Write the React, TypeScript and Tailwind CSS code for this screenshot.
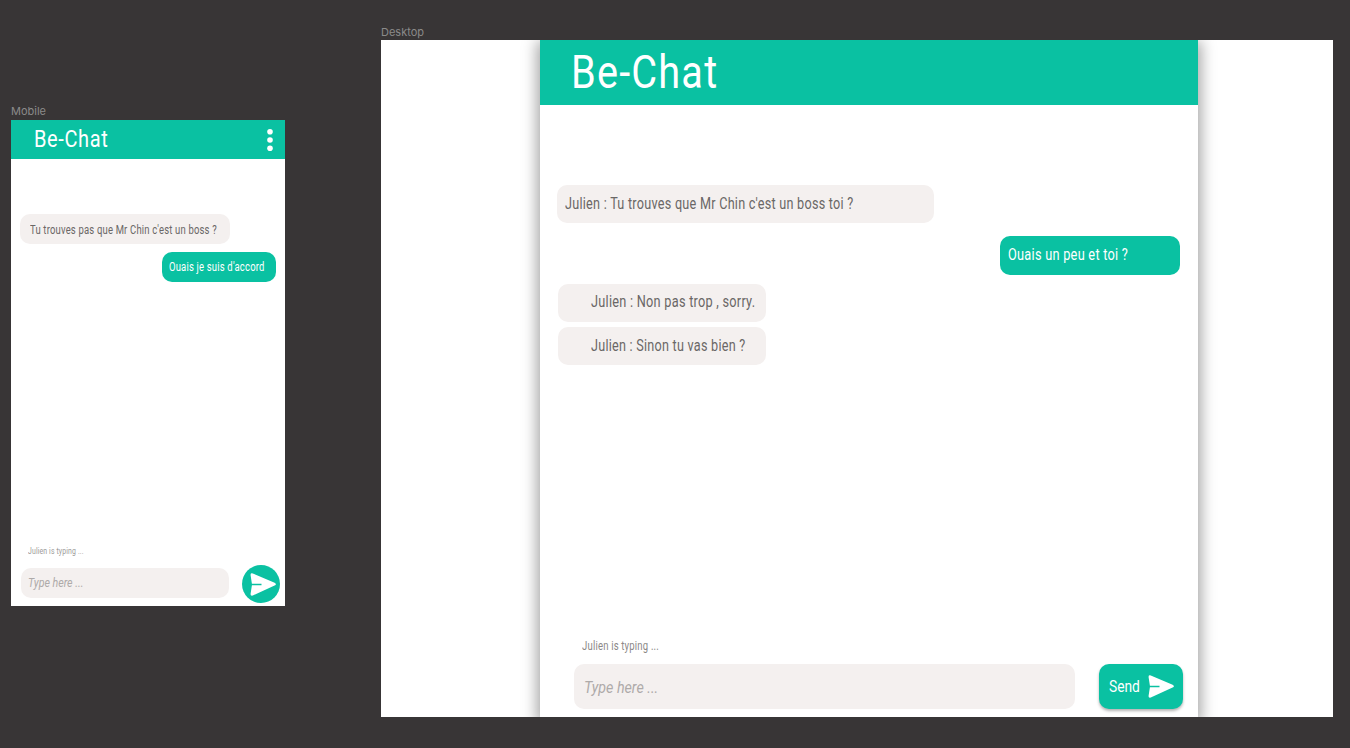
import { useLayoutEffect, useRef, useState } from "react";

type FitTextProps = { text: string; width: number; className?: string };

/* Condenses one line of text so that it spans the given width. */
function FitText({ text, width, className = "" }: FitTextProps) {
  const ref = useRef<HTMLSpanElement>(null);
  const [scale, setScale] = useState(1);
  useLayoutEffect(() => {
    if (ref.current) setScale(width / ref.current.offsetWidth);
  }, [text, width]);
  return (
    <span className={`block whitespace-nowrap ${className}`} style={{ width }}>
      <span ref={ref} className="inline-block origin-left" style={{ transform: `scaleX(${scale})` }}>
        {text}
      </span>
    </span>
  );
}

function SendIcon({ className }: { className: string }) {
  return (
    <svg viewBox="0 0 26 23" className={className} fill="none">
      <path
        d="M2.8 .4 24.6 9.8Q27.2 11.2 24.6 12.6L2.8 22.5Q.3 23.2 .6 20.8L1.9 12.3H11.5V10.8H1.9L.6 2.2Q.3 -.2 2.8 .4Z"
        fill="currentColor"
      />
    </svg>
  );
}

function Mobile() {
  return (
    <section className="mt-[104px] ml-[11px] w-[274px] shrink-0">
      <h2 className="h-4 font-[Inter] text-[11px] leading-[15px] text-[#8b8a8a]">
        <FitText text="Mobile" width={35} />
      </h2>
      <div className="flex h-[486px] flex-col bg-white">
        <header className="flex h-[39px] items-center justify-between bg-[#0ac1a2] pr-3 pl-[23px] text-white">
          <FitText text="Be-Chat" width={74} className="text-[23px] leading-[39px] tracking-[0.03em]" />
          <svg viewBox="0 0 6 22" className="h-[22px] w-[6px] fill-white">
            <circle cx="3" cy="2.8" r="2.8" />
            <circle cx="3" cy="11" r="2.8" />
            <circle cx="3" cy="19.2" r="2.8" />
          </svg>
        </header>
        <main className="flex flex-1 flex-col pt-[55px]">
          <div className="ml-[9px] flex h-[30px] w-[210px] items-center rounded-[10px] bg-[#f4f0ef] pt-[2px] pl-[10px] text-[#6a6766]">
            <FitText text="Tu trouves pas que Mr Chin c'est un boss ?" width={187} className="text-[12px] tracking-[0.02em]" />
          </div>
          <div className="mt-2 ml-[151px] flex h-[30px] w-[114px] items-center rounded-[10px] bg-[#0ac1a2] pl-[6.5px] text-white">
            <FitText text="Ouais je suis d'accord" width={95.5} className="text-[12px] tracking-[0.02em]" />
          </div>
        </main>
        <footer className="flex h-[61px] flex-col">
          <FitText text="Julien is typing ..." width={56} className="ml-[17px] text-[8.5px] leading-[13px] tracking-[0.02em] text-[#9c9a99]" />
          <div className="flex items-center justify-between pt-[6px] pr-[5px] pl-[10px]">
            <div className="flex h-[30px] w-[208px] items-center rounded-[10px] bg-[#f4f0ef] pl-[7px] text-[#aeaaa9]">
              <FitText text="Type here ..." width={55} className="text-[12px] italic" />
            </div>
            <button className="relative top-[1px] flex size-[38px] items-center justify-center rounded-full bg-[#0ac1a2] pl-[4px] text-white">
              <SendIcon className="h-[23px] w-[26px]" />
            </button>
          </div>
        </footer>
      </div>
    </section>
  );
}

function Desktop() {
  return (
    <section className="mt-[24px] ml-[96px] w-[952px] shrink-0">
      <h2 className="h-4 font-[Inter] text-[11px] leading-4 text-[#8b8a8a]">
        <FitText text="Desktop" width={43} />
      </h2>
      <div className="h-[677px] overflow-hidden bg-white pl-[158.5px]">
        <div className="flex h-full w-[658.5px] flex-col bg-white shadow-[0_4px_14px_3px_rgba(0,0,0,0.36)]">
          <header className="h-[65px] bg-[#0ac1a2] pl-[31.5px] text-white">
            <FitText text="Be-Chat" width={147.5} className="text-[46px] leading-[65px] tracking-[0.03em]" />
          </header>
          <main className="flex flex-1 flex-col pt-[80px] text-[16px] tracking-[0.02em]">
            <div className="ml-[17.5px] flex h-[38px] w-[377px] items-center rounded-[10px] bg-[#f4f0ef] pl-[8px] text-[#6a6766]">
              <FitText text="Julien : Tu trouves que Mr Chin c'est un boss toi ?" width={288.5} />
            </div>
            <div className="mt-[13px] ml-[460.5px] flex h-[39px] w-[180px] items-center rounded-[10px] bg-[#0ac1a2] pb-[2px] pl-[7.5px] text-white">
              <FitText text="Ouais un peu et toi ?" width={120.5} />
            </div>
            <div className="mt-[9px] ml-[18.5px] flex h-[38px] w-[208px] items-center rounded-[10px] bg-[#f4f0ef] pb-[2px] pl-[32.5px] text-[#6a6766]">
              <FitText text="Julien : Non pas trop , sorry." width={164} />
            </div>
            <div className="mt-[5px] ml-[18.5px] flex h-[38px] w-[208px] items-center rounded-[10px] bg-[#f4f0ef] pl-[32.5px] text-[#6a6766]">
              <FitText text="Julien : Sinon tu vas bien ?" width={154.5} />
            </div>
          </main>
          <footer className="h-[79px]">
            <FitText text="Julien is typing ..." width={77} className="ml-[42.5px] text-[12px] leading-[17px] tracking-[0.02em] text-[#8b8887]" />
            <div className="flex items-center gap-[24px] pt-[9px] pl-[34.5px]">
              <div className="flex h-[45px] w-[501px] items-center rounded-[10px] bg-[#f4f0ef] pt-[2px] pl-[10px] text-[#aeaaa9]">
                <FitText text="Type here ..." width={74} className="text-[16px] italic" />
              </div>
              <button className="flex h-[45px] w-[84px] items-center gap-[8px] rounded-[10px] bg-[#0ac1a2] pl-[10px] text-white shadow-[0_2px_3px_rgba(0,0,0,0.3)]">
                <FitText text="Send" width={31} className="text-[16px]" />
                <SendIcon className="h-[23px] w-[26px]" />
              </button>
            </div>
          </footer>
        </div>
      </div>
    </section>
  );
}

export default function App() {
  return (
    <div className="flex h-[748px] w-[1350px] items-start overflow-hidden bg-[#383536] font-['Roboto',sans-serif]">
      <Mobile />
      <Desktop />
    </div>
  );
}
